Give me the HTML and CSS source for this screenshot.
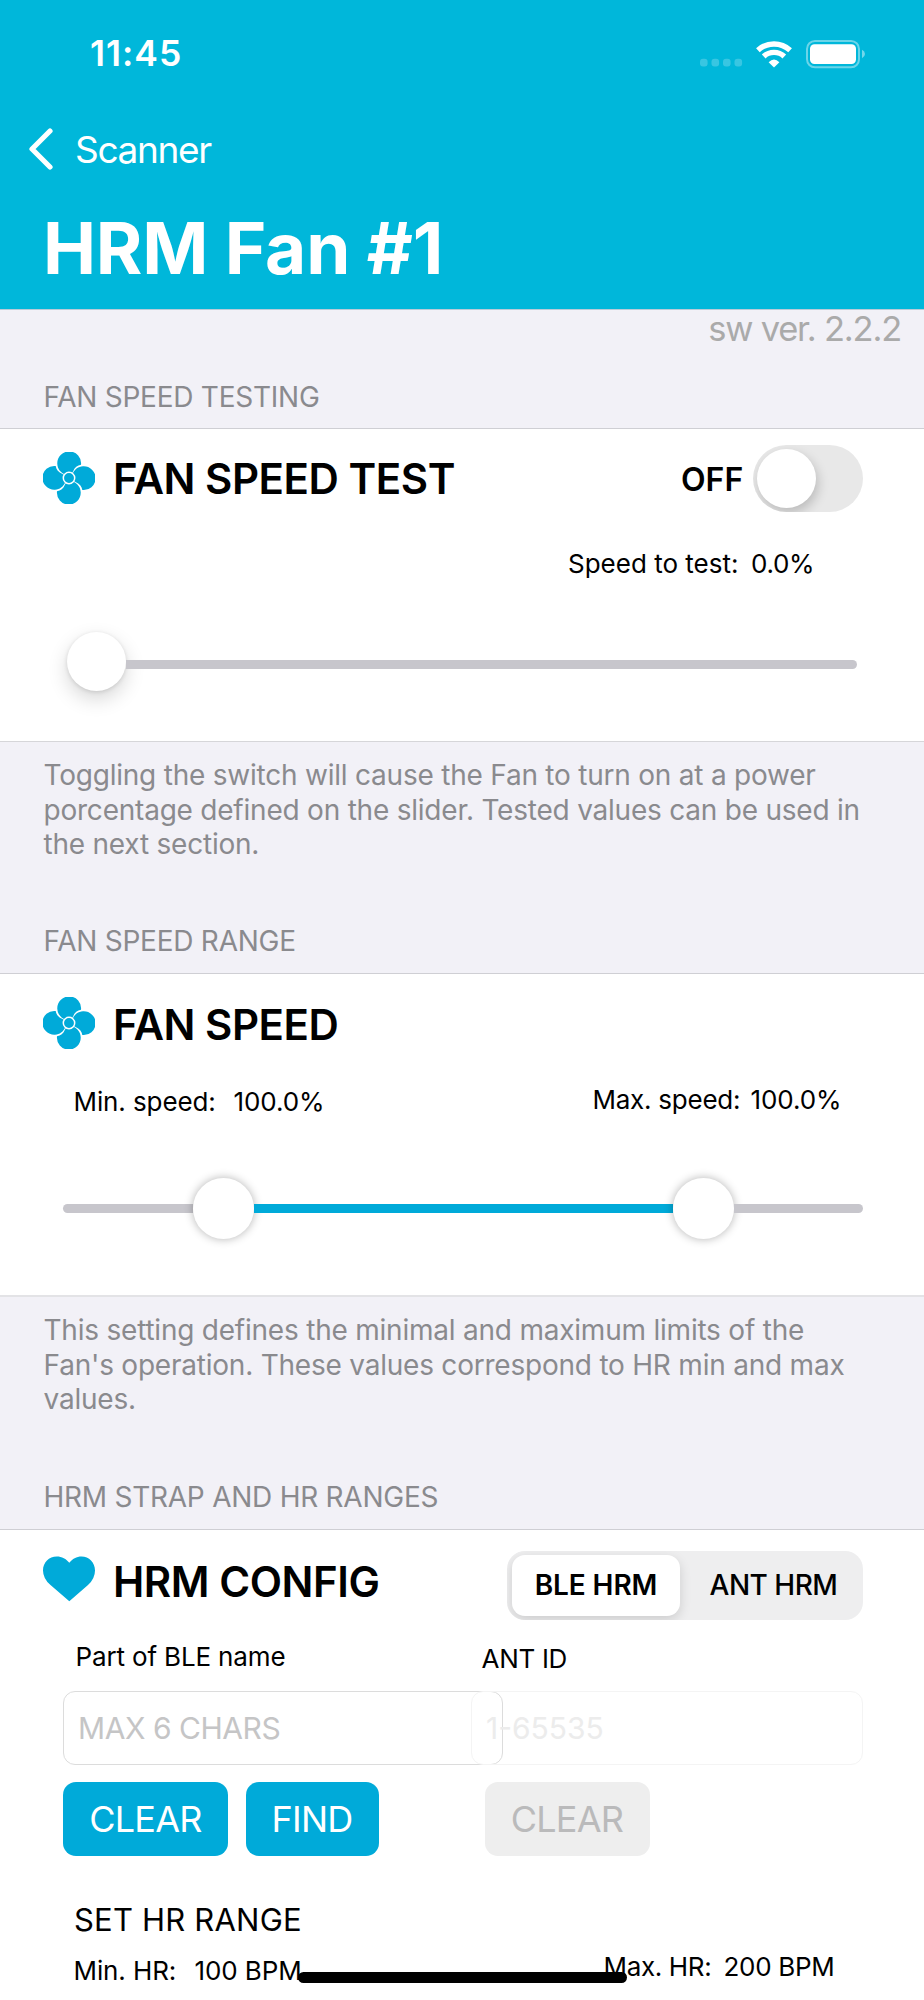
FILE: index.html
```html
<!DOCTYPE html>
<html lang="en">
<head>
<meta charset="utf-8">
<title>HRM Fan #1</title>
<link rel="stylesheet" href="styles.css">
</head>
<body>
<svg class="defs" width="0" height="0">
  <symbol id="fan" viewBox="0 0 52 52">
    <g fill="#00aad9">
      <path id="blade" d="M38 12.7A11.9 11.9 0 1 0 14.3 12C14.6 17 17.3 20 21 22L26 26L30 19.5C31.5 15.5 34.5 13.2 38 12.7Z"/>
      <use href="#blade" transform="rotate(90 26 26)"/>
      <use href="#blade" transform="rotate(180 26 26)"/>
      <use href="#blade" transform="rotate(270 26 26)"/>
    </g>
    <circle cx="26" cy="26" r="5.7" fill="#00aad9" stroke="#fff" stroke-width="1.5"/>
  </symbol>
</svg>
<header class="header">
  <div class="status">
    <span class="clock">11:45</span>
    <svg class="status-icons" width="166" height="34" viewBox="0 0 166 34">
      <g fill="#fff" fill-opacity=".22">
        <rect x="0" y="23.8" width="7.6" height="7.6" rx="3"/>
        <rect x="11.5" y="23.8" width="7.6" height="7.6" rx="3"/>
        <rect x="23" y="23.8" width="7.6" height="7.6" rx="3"/>
        <rect x="34.5" y="23.8" width="7.6" height="7.6" rx="3"/>
      </g>
      <g transform="translate(0 -1)">
        <g fill="none" stroke="#fff" stroke-width="5.4">
          <path d="M57.9 16.2A23.8 23.8 0 0 1 90.1 16.2"/>
          <path d="M63.7 22.4A15.2 15.2 0 0 1 84.3 22.4"/>
        </g>
        <path d="M74 33.6L68.6 28.2Q74 23 79.4 28.2Z" fill="#fff"/>
      </g>
      <g transform="translate(0 -1.3)">
        <rect x="107" y="7.2" width="52" height="26.4" rx="8" fill="none" stroke="#fff" stroke-opacity=".42" stroke-width="2"/>
        <rect x="110" y="10.5" width="46" height="19.8" rx="4.5" fill="#fff"/>
        <path d="M162 16Q165 17.5 165 20.3T162 24.6Z" fill="#fff" fill-opacity=".45"/>
      </g>
    </svg>
  </div>
  <nav class="nav">
    <svg width="28" height="42" viewBox="0 0 28 42"><path d="M22 3L4 21L22 39" fill="none" stroke="#fff" stroke-width="5.2" stroke-linecap="round" stroke-linejoin="round"/></svg>
    <span class="back">Scanner</span>
  </nav>
  <h1 class="title">HRM Fan #1</h1>
</header>
<main>
  <div class="version"><span>sw ver. 2.2.2</span></div>
  <h2 class="label label-1">FAN SPEED TESTING</h2>
  <section class="card card-test">
    <div class="row">
      <svg class="icon" width="52" height="52"><use href="#fan"/></svg>
      <span class="heading">FAN SPEED TEST</span>
      <span class="off">OFF</span>
      <span class="switch"><span class="knob"></span></span>
    </div>
    <div class="values values-test"><span class="t-speed">Speed to test:</span><span class="t-zero">0.0%</span></div>
    <div class="slider slider-test"><span class="thumb thumb-soft"></span><span class="bar bar-end"></span></div>
  </section>
  <p class="note">Toggling the switch will cause the Fan to turn on at a power<br>porcentage defined on the slider. Tested values can be used in<br>the next section.</p>
  <h2 class="label label-2">FAN SPEED RANGE</h2>
  <section class="card card-range">
    <div class="row row-range">
      <svg class="icon" width="52" height="52"><use href="#fan"/></svg>
      <span class="heading">FAN SPEED</span>
    </div>
    <div class="values values-range"><span class="t-min">Min. speed:</span><span class="t-minv">100.0%</span><span class="t-max">Max. speed:</span><span class="t-maxv">100.0%</span></div>
    <div class="slider slider-range"><span class="bar bar-start"></span><span class="thumb"></span><span class="bar bar-mid"></span><span class="thumb"></span><span class="bar bar-end"></span></div>
  </section>
  <p class="note note-2">This setting defines the minimal and maximum limits of the<br>Fan's operation. These values correspond to HR min and max<br>values.</p>
  <h2 class="label label-3">HRM STRAP AND HR RANGES</h2>
  <section class="card card-hrm">
    <div class="row row-hrm">
      <svg class="icon heart" width="52" height="46" viewBox="0 0 52 46"><path d="M26.3 45.3L7.5 29Q0 22.5 0 14.4C0 6.5 6 .5 13.8 .5C18.8 .5 23.3 2.8 26.3 6.8C29.3 2.8 33.6 .5 38.5 .5C46 .5 52 6.5 52 14.4Q52 22.5 45 29Z" fill="#00aad9"/></svg>
      <span class="heading">HRM CONFIG</span>
      <span class="segment"><span class="seg-item seg-on"><b>BLE HRM</b></span><span class="seg-item"><i>ANT HRM</i></span></span>
    </div>
    <div class="values values-ids"><span class="t-ble">Part of BLE name</span><span class="t-ant">ANT ID</span></div>
    <div class="fields"><div class="field"><span>MAX 6 CHARS</span></div><div class="field field-off"><span>1-65535</span></div></div>
    <div class="buttons"><span class="btn btn-clear">CLEAR</span><span class="btn btn-find">FIND</span><span class="btn btn-off">CLEAR</span></div>
    <div class="range-title"><span>SET HR RANGE</span></div>
    <div class="values values-hr"><span class="t-min">Min. HR:</span><span class="t-hrminv">100 BPM</span><span class="t-hrmax">Max. HR:</span><span class="t-hrmaxv">200 BPM</span></div>
  </section>
</main>
<div class="home-bar"></div>
</body>
</html>
```
FILE: styles.css
```css
* { box-sizing: border-box; }
body {
  margin: 0;
  width: 924px;
  height: 2000px;
  overflow: hidden;
  position: relative;
  background: #f2f1f7;
  font-family: Inter, "Liberation Sans", sans-serif;
  color: #000;
  white-space: nowrap;
}
.defs { display: block; }
h1, h2, p { margin: 0; font-weight: 400; }

.header { height: 310px; background: #00b7da; border-bottom: 1px solid #b9cbd8; color: #fff; }
.status { display: flex; align-items: center; height: 106px; padding-left: 90px; }
.clock { width: 610px; font-size: 35.5px; font-weight: 600; letter-spacing: 1px; }
.status-icons { margin-top: -2px; }
.nav { display: flex; align-items: center; height: 86px; padding-left: 28px; }
.back { margin-left: 19px; font-size: 37px; letter-spacing: -1.35px; }
.title { height: 113px; padding-left: 43px; line-height: 113px; font-size: 71px; font-weight: 700; letter-spacing: -.2px; }

.version { display: flex; justify-content: flex-end; height: 38px; padding-right: 23px; line-height: 38px; font-size: 34.5px; letter-spacing: -1.2px; color: #aaa; }
.label { padding-left: 43.5px; height: 63px; line-height: 63px; font-size: 28px; letter-spacing: -.25px; color: #8a8a8e; }
.label-1 { height: 62px; margin-top: 18px; line-height: 62px; }
.label-2 { margin-top: 49px; }
.label-3 { margin-top: 50px; }
.note { height: 119px; padding: 16px 0 0 43.5px; line-height: 34.5px; font-size: 28px; letter-spacing: -.22px; color: #8a8a8e; }

.card { background: #fff; border-top: 1px solid #cfcfd4; border-bottom: 1px solid #d6d6d9; }
.card-test { height: 314px; }
.card-range { height: 324px; border-bottom: 2px solid #e3e3e6; }
.card-hrm { height: 480px; border-bottom: 0; }
.row { display: flex; align-items: center; height: 98px; padding-left: 43px; }
.row-range { height: 100px; }
.row-range .icon { margin-top: -2px; }
.row-hrm { height: 102px; }
.heading { width: 567px; margin-left: 18px; font-size: 42px; font-weight: 600; letter-spacing: -.45px; }
.off { width: 73px; padding: 2px 0 0 1px; font-size: 32px; font-weight: 600; }
.switch { width: 110px; height: 67px; padding: 4px; border-radius: 34px; background: #e8e8e8; overflow: hidden; }
.knob { display: block; width: 59px; height: 59px; border-radius: 50%; background: #fff; box-shadow: 2px 5px 12px rgba(0,0,0,.2); }

.values { display: flex; align-items: center; font-size: 26px; letter-spacing: -.1px; }
.values-test { height: 72px; padding-left: 568px; }
.t-speed { width: 183px; letter-spacing: 0; }
.t-zero { letter-spacing: -.3px; }
.values-range { height: 54px; padding-left: 73.5px; }
.t-min { width: 121px; }
.values-range .t-min { width: 160px; }
.t-minv { width: 359px; }
.t-max { width: 158px; margin-top: -3px; letter-spacing: -.25px; }
.t-maxv { margin-top: -3px; }

.slider { display: flex; align-items: center; }
.slider-test { height: 130px; padding-left: 66.5px; width: 857px; }
.slider-range { height: 161px; padding-left: 63px; width: 863px; }
.bar { height: 9px; background: #c7c6cc; }
.bar-start { width: 130px; border-radius: 5px 0 0 5px; }
.bar-mid { width: 419px; background: #00aad9; }
.bar-end { flex: 1; border-radius: 0 5px 5px 0; }
.thumb { flex: none; width: 61px; height: 61px; border-radius: 50%; background: #fff; box-shadow: 0 0 10px rgba(0,0,0,.3); }
.thumb-soft { width: 59px; height: 59px; margin-top: -5px; box-shadow: 0 8px 20px rgba(0,0,0,.16), 0 1px 4px rgba(0,0,0,.12); }

.row-hrm .heading { width: 394px; }
.heart { margin-top: -5px; }
.segment { display: flex; width: 356px; height: 69px; margin-top: 8px; padding: 4px 5px; border-radius: 18px; background: #eeeeef; font-size: 28px; overflow: hidden; }
.seg-item { flex: 1; display: flex; align-items: center; justify-content: center; height: 61px; padding-left: 9px; border-radius: 13px; letter-spacing: -.5px; }
.seg-on { flex: none; width: 168px; padding-left: 0; background: #fff; box-shadow: 0 4px 12px rgba(0,0,0,.14); letter-spacing: -.1px; }
.seg-item b { font-weight: 600; }
.seg-item i { font-style: normal; font-weight: 500; }

.values-ids { height: 49px; padding-left: 75.5px; }
.t-ble { width: 406px; letter-spacing: -.15px; }
.t-ant { margin-top: 3px; letter-spacing: -.3px; }
.fields { display: grid; grid-template-columns: 408px 392px; height: 74px; margin: 10px 0 0 63px; }
.field { width: 440px; padding-left: 14px; line-height: 72px; border: 1px solid #dcdcdc; border-radius: 12px; font-size: 30px; letter-spacing: -.45px; color: #c5c5c6; }
.field-off { width: 392px; border-color: #f4f4f4; letter-spacing: 0; color: #ececec; }
.buttons { display: flex; height: 74px; margin: 17px 0 0 63px; font-size: 36px; letter-spacing: -.75px; color: #fff; }
.btn { width: 165px; border-radius: 13px; background: #00aad9; line-height: 74px; text-align: center; }
.btn-find { width: 133px; margin: 0 106px 0 17.5px; }
.btn-off { background: #eeeeee; color: #bababb; }
.range-title { height: 55px; margin-top: 36px; padding-left: 74px; line-height: 55px; font-size: 31px; letter-spacing: .2px; }
.values-hr { height: 46px; padding-left: 73.5px; }
.t-hrminv { width: 409px; }
.t-hrmax { width: 120px; margin-top: -7px; letter-spacing: -.35px; }
.t-hrmaxv { margin-top: -7px; letter-spacing: -.3px; }
.home-bar { position: absolute; left: 298px; top: 1972px; width: 329px; height: 11px; border-radius: 6px; background: #000; }
```
